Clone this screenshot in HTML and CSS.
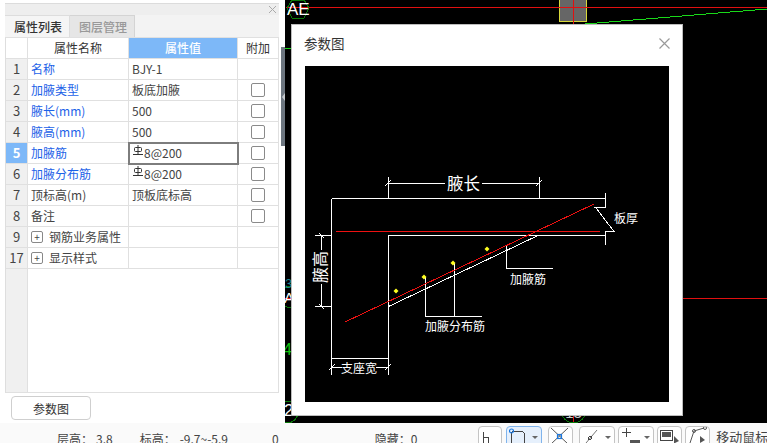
FILE: index.html
```html
<!DOCTYPE html>
<html lang="zh">
<head>
<meta charset="utf-8">
<title>参数图</title>
<link rel="stylesheet" href="styles.css">
</head>
<body>
<div class="app">
  <div class="main">
    <aside class="panel">
      <div class="panel-strip"><svg class="strip-x" width="9" height="9" viewBox="0 0 9 9"><path d="M1 1L8 8M8 1L1 8"/></svg></div>
      <div class="tabs">
        <div class="tab tab-on">属性列表</div>
        <div class="tab tab-off">图层管理</div>
      </div>
      <table class="props">
        <colgroup><col class="c-num"><col class="c-name"><col class="c-val"><col class="c-add"></colgroup>
        <thead>
          <tr><th class="num-blank"></th><th>属性名称</th><th class="th-on">属性值</th><th>附加</th></tr>
        </thead>
        <tbody>
          <tr><td class="num">1</td><td class="link">名称</td><td>BJY-1</td><td></td></tr>
          <tr><td class="num">2</td><td class="link">加腋类型</td><td>板底加腋</td><td class="chk"><span class="box"></span></td></tr>
          <tr><td class="num">3</td><td class="link">腋长(mm)</td><td>500</td><td class="chk"><span class="box"></span></td></tr>
          <tr><td class="num">4</td><td class="link">腋高(mm)</td><td>500</td><td class="chk"><span class="box"></span></td></tr>
          <tr><td class="num num-on">5</td><td class="link">加腋筋</td><td class="cell-sel"><svg class="rebar" width="10" height="10" viewBox="0 0 10 10"><path d="M5 0V9M0 9.5H10"/><rect x="1.5" y="2.5" width="7" height="4" rx="1"/></svg>8@200</td><td class="chk"><span class="box"></span></td></tr>
          <tr><td class="num">6</td><td class="link">加腋分布筋</td><td><svg class="rebar" width="10" height="10" viewBox="0 0 10 10"><path d="M5 0V9M0 9.5H10"/><rect x="1.5" y="2.5" width="7" height="4" rx="1"/></svg>8@200</td><td class="chk"><span class="box"></span></td></tr>
          <tr><td class="num">7</td><td>顶标高(m)</td><td>顶板底标高</td><td class="chk"><span class="box"></span></td></tr>
          <tr><td class="num">8</td><td>备注</td><td></td><td class="chk"><span class="box"></span></td></tr>
          <tr><td class="num">9</td><td><span class="group"><span class="plus">+</span>钢筋业务属性</span></td><td></td><td></td></tr>
          <tr><td class="num">17</td><td><span class="group"><span class="plus">+</span>显示样式</span></td><td></td><td></td></tr>
          <tr class="filler"><td class="num"></td><td class="blank" colspan="3"></td></tr>
        </tbody>
      </table>
      <button class="param-btn" type="button">参数图</button>
      <div class="scroll-thumb"></div>
      <div class="collapse-arrow"></div>
    </aside>

    <section class="canvas">
      <svg class="cad" width="482" height="423" viewBox="285 0 482 423">
        <g class="cad-lines">
          <rect class="col" x="559.5" y="-2" width="27" height="23"/>
          <path class="red" d="M286 7.5H767M573.5 0V24"/>
          <path class="lime" d="M585 24L767 9M285 48.5H291"/>
          <path class="red" d="M285 298.5H767M573.5 412V423"/>
          <polygon class="ring" points="292,0 304,0 309,8 304,18 292,18 287,8"/>
          <circle class="ring" cx="291" cy="297" r="11"/>
          <circle class="ring" cx="287" cy="412" r="11"/>
          <circle class="ring" cx="573.5" cy="411" r="12"/>
        </g>
        <text class="t-ae" x="287" y="15">AE</text>
        <text class="t-teal" x="285" y="288">31</text>
        <text class="t-a" x="284" y="303">A</text>
        <text class="t-green" x="283" y="355">40</text>
        <text class="t-two" x="284" y="416">2</text>
        <text class="t-13" x="573.5" y="418">13</text>
      </svg>

      <div class="dialog">
        <header class="dialog-head">
          <span class="dialog-title">参数图</span>
          <svg class="dialog-x" width="11" height="11" viewBox="0 0 11 11"><path d="M0.5 0.5L10.5 10.5M10.5 0.5L0.5 10.5"/></svg>
        </header>
        <svg class="diagram" width="364" height="336" viewBox="305 66 364 336">
          <g class="d-white">
            <path d="M388.5 177V198M539.5 177V198M388.5 183.5H445M482 183.5H539.5M385 186L391 180M536 186L542 180"/>
            <path d="M331.5 198.5H605.5V207.5H594M605.5 193V207M596 208L614 231.5H605.5V245M605.5 235.5H388.5V375"/>
            <path d="M331.5 198.5V375M331.5 358.5H388.5M331.5 367.5H342M376 367.5H388.5M329 370L335 364M385 370L391 364"/>
            <path d="M315 235.5H331M315 306.5H331M321.5 235.5V250M321.5 284V306.5M319 233L324 238M319 304L324 309"/>
            <path d="M388.5 306.5L538 235.5"/>
            <path d="M425.5 277V316.5H482M454.5 263V316.5"/>
            <path d="M506.5 245V268.5H553"/>
          </g>
          <path class="d-red" d="M345 322L594 204M336 231.5H600"/>
          <g class="d-yellow">
            <polygon points="396,288.5 398.5,291 396,293.5 393.5,291"/>
            <polygon points="424,274.5 426.5,277 424,279.5 421.5,277"/>
            <polygon points="453,260.5 455.5,263 453,265.5 450.5,263"/>
            <polygon points="487,246.5 489.5,249 487,251.5 484.5,249"/>
          </g>
          <text class="d-big" x="447" y="190">腋长</text>
          <text class="d-small" x="614" y="223">板厚</text>
          <text class="d-small" x="510" y="284">加腋筋</text>
          <text class="d-small" x="425" y="331">加腋分布筋</text>
          <text class="d-small" x="341" y="373">支座宽</text>
          <text class="d-vert" x="319" y="267" transform="rotate(-90 319 267)">腋高</text>
        </svg>
      </div>
    </section>
  </div>

  <footer class="status">
    <span class="s-a">层高：</span><span class="s-b">3.8</span>
    <span class="s-c">标高：</span><span class="s-d">-9.7~-5.9</span>
    <span class="s-e">0</span>
    <span class="s-f">隐藏：0</span>
    <div class="tools">
      <div class="tool w24"><svg width="24" height="17" viewBox="0 0 24 17"><path class="ic" d="M5.5 6V17M5.5 11.5H10.5V17"/></svg></div>
      <div class="tool w36 tool-on m4"><svg width="36" height="17" viewBox="0 0 36 17"><path class="ic" d="M5.5 5.5H15Q18.5 5.5 18.5 9V17M5.5 5.5V17"/><circle class="ic-blue" cx="5.5" cy="5" r="2"/><path class="caret" d="M26 10H32L29 13Z"/></svg></div>
      <div class="tool w25 m6"><svg width="25" height="17" viewBox="0 0 25 17"><path class="ic-x" d="M3 2L20 18M20 2L3 18"/><rect class="ic-blue" x="9.5" y="8.5" width="4" height="4"/></svg></div>
      <div class="tool w36 m6"><svg width="36" height="17" viewBox="0 0 36 17"><path class="ic-thin" d="M7 17L18 4"/><circle class="ic" cx="11" cy="12" r="1.5"/><path class="caret" d="M26 10H32L29 13Z"/></svg></div>
      <div class="tool w36 m3"><svg width="36" height="17" viewBox="0 0 36 17"><path class="ic" d="M8.5 2V11M4 6.5H13"/><rect class="ic-dark" x="12" y="14" width="10" height="3"/><path class="caret" d="M26 10H32L29 13Z"/></svg></div>
      <div class="tool w25 m3"><svg width="25" height="17" viewBox="0 0 25 17"><rect class="ic" x="3.5" y="4.5" width="12" height="10"/><rect class="ic-dark" x="5" y="6" width="9" height="5"/><path class="ic-dark" d="M17 10L22 15L18 17H17Z"/></svg></div>
      <div class="tool w25 m3"><svg width="25" height="17" viewBox="0 0 25 17"><path class="ic-x" d="M5 17L9 5L19 2"/><circle class="ic-x" cx="9" cy="5" r="1.5"/><circle class="ic-x" cx="20" cy="2" r="1.5"/><path class="ic-dark" d="M15 10L20 14L15 17Z"/></svg></div>
    </div>
    <span class="s-g">移动鼠标指针</span>
  </footer>
</div>
</body>
</html>
```
FILE: styles.css
```css
* { box-sizing: border-box; }
html, body { margin: 0; padding: 0; }
body {
  width: 767px;
  height: 443px;
  overflow: hidden;
  font-family: "Noto Sans CJK SC", "Noto Sans", sans-serif;
  font-size: 12px;
  color: #333;
  background: #000;
}
.app { display: flex; flex-direction: column; height: 443px; }
.main { display: flex; height: 423px; flex: none; }

/* left property panel */
.panel {
  position: relative;
  flex: none;
  width: 285px;
  height: 423px;
  padding: 3px 6px 0 5px;
  background: #fff;
  display: flex;
  flex-direction: column;
}
.panel-strip {
  height: 12px;
  background: #eeeeee;
  border-top: 1px solid #dcdcdc;
  display: flex;
  justify-content: flex-end;
  align-items: center;
  padding-right: 2px;
}
.strip-x path { stroke: #aaa; stroke-width: 1; fill: none; }
.tabs {
  height: 22px;
  background: #f3f3f3;
  display: flex;
  align-items: stretch;
}
.tab {
  width: 65px;
  display: flex;
  align-items: center;
  justify-content: center;
  padding-left: 2px;
  font-size: 12px;
}
.tab-on { font-weight: 500; color: #333; border-top: 1px solid #ddd; border-right: 1px solid #ddd; background: #f5f5f5; }
.tab-off { color: #999; background: #e6e6e6; border-top: 1px solid #d4d4d4; border-right: 1px solid #d4d4d4; font-weight: 500; }

.props {
  table-layout: fixed;
  border-collapse: separate;
  border-spacing: 0;
  width: 274px;
  border-top: 1px solid #e0e0e0;
  border-left: 1px solid #dedede;
  flex: none;
}
.c-num { width: 22px; }
.c-name { width: 101px; }
.c-val { width: 109px; }
.c-add { width: 41px; }
.props th, .props td {
  height: 21px;
  padding: 0;
  border-right: 1px solid #e0e0e0;
  border-bottom: 1px solid #e0e0e0;
  line-height: 20px;
  white-space: nowrap;
  overflow: hidden;
  font-weight: 400;
  font-size: 12px;
  color: #444;
}
.props th { text-align: center; color: #333; }
.props .th-on { background: #7db8f8; color: #fff; font-weight: 500; }
.props td { padding-left: 3px; }
.props td.num {
  padding: 0;
  text-align: center;
  background: #f0f0f0;
  font-size: 13px;
  color: #444;
}
.props td.num-on { background: #7db8f8; color: #fff; font-weight: 700; }
.props td.link { color: #1c62e8; }
.props td.chk { padding: 0; text-align: center; }
.box {
  display: block;
  width: 14px;
  height: 14px;
  margin: 0 auto;
  border: 1px solid #8a8a8a;
  border-radius: 2px;
  background: #fff;
}
.props td.cell-sel { outline: 2px solid #7d7d7d; outline-offset: -1px; }
.rebar { vertical-align: 3px; margin-right: 1px; margin-left: 1px; }
.rebar path, .rebar rect { fill: none; stroke: #333; stroke-width: 1; }
.group { display: flex; align-items: center; padding-left: 0; }
.plus {
  display: flex;
  align-items: center;
  justify-content: center;
  flex: none;
  width: 12px;
  height: 12px;
  margin-right: 6px;
  border: 1px solid #888;
  border-radius: 2px;
  font-size: 10px;
  line-height: 1;
  color: #444;
}
.props .filler td { height: 124px; border-right: 1px solid #e0e0e0; }
.props td.blank { padding: 0; }

.param-btn {
  flex: none;
  align-self: flex-start;
  width: 80px;
  height: 24px;
  margin: 3px 0 0 6px;
  padding: 0;
  border: 1px solid #cfcfcf;
  border-radius: 4px;
  background: #fff;
  color: #333;
  font: 400 12px "Noto Sans CJK SC", "Noto Sans", sans-serif;
}
.scroll-thumb {
  position: absolute;
  right: 0;
  top: 47px;
  width: 4px;
  height: 99px;
  background: #6d7680;
}
.collapse-arrow {
  position: absolute;
  right: 0;
  top: 93px;
  width: 0;
  height: 0;
  border-top: 4px solid transparent;
  border-bottom: 4px solid transparent;
  border-right: 3px solid #c4c8cc;
}

/* black CAD canvas */
.canvas {
  position: relative;
  flex: 1;
  height: 423px;
  background: #000;
  overflow: hidden;
}
.cad { position: absolute; left: 0; top: 0; display: block; }
.cad-lines { shape-rendering: crispEdges; fill: none; }
.col { fill: #666; stroke: #d8d83a; stroke-width: 1; }
.red { stroke: #e01010; stroke-width: 1; fill: none; }
.lime { stroke: #19d819; stroke-width: 1; fill: none; }
.ring { stroke: #0a7a0a; stroke-width: 1; fill: none; }
.t-ae { font: 400 17px "Liberation Sans", sans-serif; fill: #fff; }
.t-teal { font: 400 13px "Liberation Sans", sans-serif; fill: #1b8593; }
.t-a { font: 400 15px "Liberation Sans", sans-serif; fill: #fff; }
.t-green { font: 400 16px "Liberation Sans", sans-serif; fill: #12c412; }
.t-two { font: 400 17px "Liberation Sans", sans-serif; fill: #fff; }
.t-13 { font: 400 15px "Liberation Sans", sans-serif; fill: #ccc; text-anchor: middle; }

/* dialog */
.dialog {
  position: absolute;
  left: 6px;
  top: 24px;
  width: 392px;
  height: 392px;
  background: #fff;
  border: 1px solid #bdbdbd;
  padding: 0 13px;
  display: flex;
  flex-direction: column;
}
.dialog-head {
  height: 41px;
  flex: none;
  display: flex;
  align-items: center;
  justify-content: space-between;
  padding-bottom: 6px;
}
.dialog-title { font-size: 13.5px; color: #333; margin-left: -1px; }
.dialog-x { margin-right: -1px; margin-top: 2px; }
.dialog-x path { stroke: #9a9a9a; stroke-width: 1.2; fill: none; }
.diagram { display: block; flex: none; background: #000; }
.d-white path { stroke: #fff; stroke-width: 1; fill: none; shape-rendering: crispEdges; }
.d-red { stroke: #ee1111; stroke-width: 1; fill: none; shape-rendering: crispEdges; }
.d-yellow polygon { fill: #ffff20; }
.d-big { font-size: 16.5px; fill: #fff; }
.d-small { font-size: 12px; fill: #fff; }
.d-vert { font-size: 16px; fill: #fff; text-anchor: middle; dominant-baseline: central; }

/* status bar */
.status {
  flex: none;
  height: 20px;
  background: #fafafa;
  display: flex;
  align-items: flex-start;
  overflow: hidden;
  font-size: 12px;
  line-height: 16px;
  color: #444;
}
.status > span { padding-top: 8px; flex: none; }
.s-a { margin-left: 57px; }
.s-b { margin-left: 3px; }
.s-c { margin-left: 27px; }
.s-d { margin-left: 4px; }
.s-e { margin-left: 44px; }
.s-f { margin-left: 96px; }
.tools { display: flex; margin-left: 61px; padding-top: 3px; flex: none; }
.tool {
  height: 24px;
  border: 1px solid #c4c4c4;
  border-radius: 4px;
  background: #fff;
  overflow: hidden;
  flex: none;
}
.tool svg { display: block; margin: -1px 0 0 -1px; }
.tool-on { border-color: #80b4ec; background: #e6f0fc; }
.w24 { width: 24px; }
.w25 { width: 25px; }
.w36 { width: 36px; }
.m3 { margin-left: 3px; }
.m4 { margin-left: 4px; }
.m6 { margin-left: 6px; }
.ic { stroke: #444; stroke-width: 1; fill: none; shape-rendering: crispEdges; }
.ic-x { stroke: #555; stroke-width: 1; fill: none; }
.ic-thin { stroke: #777; stroke-width: 1; fill: none; }
.ic-blue { stroke: #1a78e0; stroke-width: 1.2; fill: none; }
.ic-dark { fill: #555; }
.caret { fill: #666; }
.status > .s-g { margin-left: 6px; font-size: 13px; padding-top: 6px; color: #444; white-space: nowrap; }
```
